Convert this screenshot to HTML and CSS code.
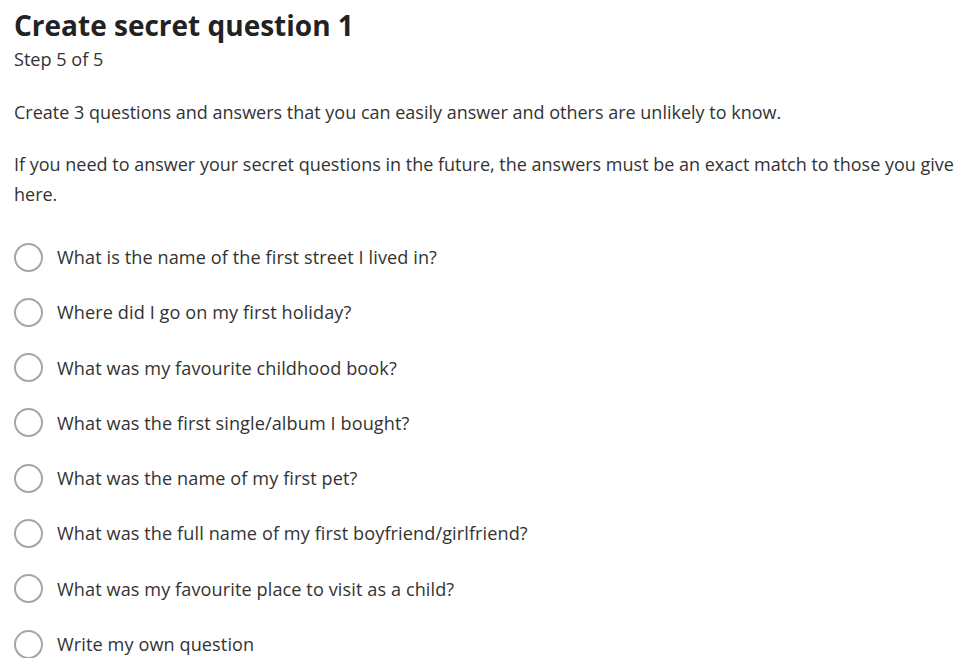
FILE: index.html
```html
<!DOCTYPE html>
<html lang="en">
<head>
<meta charset="utf-8">
<title>Create secret question 1</title>
<link rel="stylesheet" href="styles.css">
</head>
<body>
<main class="page">
  <h1 class="title">Create secret question 1</h1>
  <p class="step">Step 5 of 5</p>
  <p class="intro">Create 3 questions and answers that you can easily answer and others are unlikely to know.</p>
  <p class="intro">If you need to answer your secret questions in the future, the answers must be an exact match to those you give here.</p>
  <ul class="options">
    <li class="option"><span class="radio"></span><span class="label">What is the name of the first street I lived in?</span></li>
    <li class="option"><span class="radio"></span><span class="label">Where did I go on my first holiday?</span></li>
    <li class="option"><span class="radio"></span><span class="label">What was my favourite childhood book?</span></li>
    <li class="option"><span class="radio"></span><span class="label">What was the first single/album I bought?</span></li>
    <li class="option"><span class="radio"></span><span class="label">What was the name of my first pet?</span></li>
    <li class="option"><span class="radio"></span><span class="label">What was the full name of my first boyfriend/girlfriend?</span></li>
    <li class="option"><span class="radio"></span><span class="label">What was my favourite place to visit as a child?</span></li>
    <li class="option"><span class="radio"></span><span class="label">Write my own question</span></li>
  </ul>
</main>
</body>
</html>
```
FILE: styles.css
```css
html, body {
  margin: 0;
  padding: 0;
  background: #ffffff;
}
body {
  font-family: "Open Sans", "Noto Sans", "Liberation Sans", sans-serif;
  color: #333333;
}
.page {
  padding: 6px 6px 0 14px;
}
.title {
  margin: 0;
  font-size: 28px;
  line-height: 38px;
  font-weight: 700;
  color: #222222;
}
.step {
  margin: 0;
  font-size: 18.1px;
  line-height: 30px;
}
.intro {
  margin: 23px 0 0 0;
  font-size: 18px;
  line-height: 30px;
}
.intro + .intro {
  margin-top: 22px;
}
.options {
  list-style: none;
  margin: 34px 0 0 0;
  padding: 0;
  display: flex;
  flex-direction: column;
  gap: 27.3px;
}
.option {
  display: flex;
  align-items: center;
  gap: 14px;
  height: 28px;
}
.radio {
  flex: 0 0 auto;
  width: 25px;
  height: 25px;
  border: 2px solid #a6a6a6;
  border-radius: 50%;
  box-sizing: content-box;
}
.label {
  font-size: 18.1px;
  letter-spacing: 0.1px;
  line-height: 28px;
}
```
